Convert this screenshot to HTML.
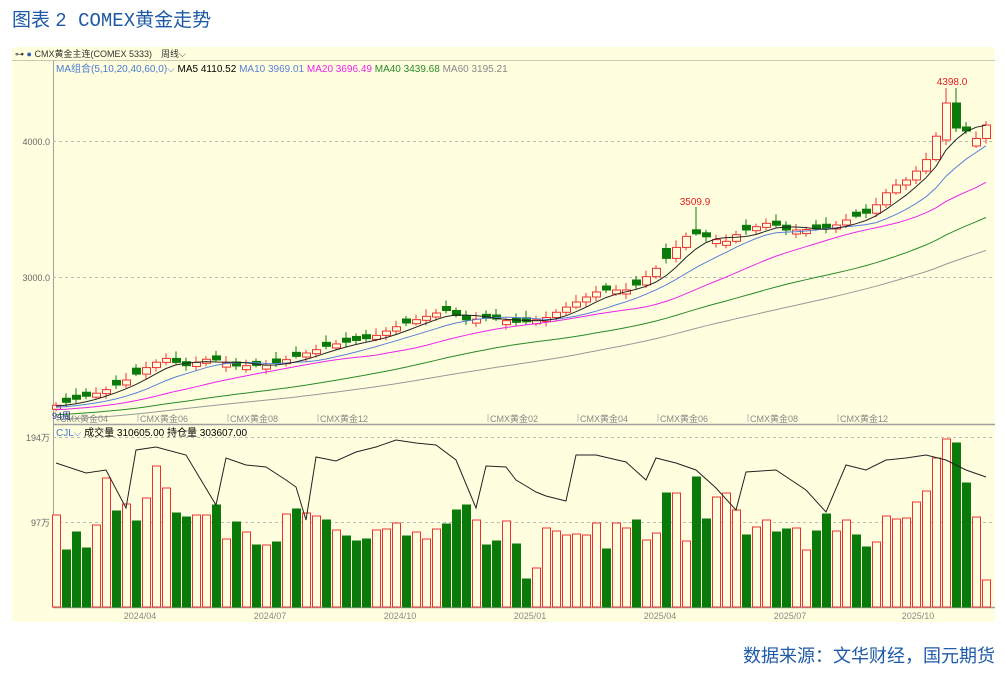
<!DOCTYPE html>
<html><head><meta charset="utf-8"><style>
html,body{margin:0;padding:0;background:#fff;width:1005px;height:673px;overflow:hidden}
svg{position:absolute;left:0;top:0}
text{font-family:"Liberation Sans","Noto Sans CJK SC",sans-serif}
</style></head><body>
<svg id="s" width="1005" height="673" xmlns="http://www.w3.org/2000/svg">
<text x="12" y="26" font-size="19" fill="#1f5aa6">图表 <tspan font-family="Liberation Mono">2 COMEX</tspan>黄金走势</text>
<rect x="12" y="47" width="983" height="575" fill="#ffffe0"/>
<line x1="12" y1="60.5" x2="995" y2="60.5" stroke="#c8c8b4"/>
<line x1="53.5" y1="61" x2="53.5" y2="608" stroke="#a0a0a0"/>
<line x1="53" y1="424.5" x2="995" y2="424.5" stroke="#a0a0a0" stroke-width="1.5"/>
<line x1="53" y1="607.5" x2="995" y2="607.5" stroke="#a0a0a0" stroke-width="1.5"/>
<line x1="53" y1="141.5" x2="995" y2="141.5" stroke="#bbb" stroke-dasharray="3,3"/>
<line x1="53" y1="277.5" x2="995" y2="277.5" stroke="#bbb" stroke-dasharray="3,3"/>
<line x1="53" y1="437.5" x2="995" y2="437.5" stroke="#bbb" stroke-dasharray="3,3"/>
<line x1="53" y1="522.5" x2="995" y2="522.5" stroke="#bbb" stroke-dasharray="3,3"/>
<text x="15" y="57" font-size="9" fill="#333">⊶ <tspan fill="#2a5db0">●</tspan> CMX黄金主连(COMEX 5333)　周线⌵</text>
<text x="56" y="72" font-size="10" fill="#4a78d0">MA组合(5,10,20,40,60,0)⌵ <tspan fill="#000">MA5 4110.52</tspan> <tspan fill="#5a7fd8">MA10 3969.01</tspan> <tspan fill="#ee22ee">MA20 3696.49</tspan> <tspan fill="#2a8a2a">MA40 3439.68</tspan> <tspan fill="#888">MA60 3195.21</tspan></text>
<text x="50" y="145" font-size="9" fill="#666" text-anchor="end">4000.0</text>
<text x="50" y="281" font-size="9" fill="#666" text-anchor="end">3000.0</text>
<text x="50" y="441" font-size="9" fill="#666" text-anchor="end">194万</text>
<text x="50" y="526" font-size="9" fill="#666" text-anchor="end">97万</text>
<text x="56" y="436" font-size="10" fill="#000"><tspan fill="#4a78d0">CJL⌵</tspan> 成交量 310605.00  持仓量 303607.00</text>
<g id="g"></g>
<text x="995" y="662" font-size="18" fill="#1f5aa6" text-anchor="end">数据来源：文华财经，国元期货</text>
</svg>
<script>
var g=document.getElementById('g'),h='';
var vb="56 r515,66 g550,76 g532,86 g548,96 r525,106 r478,116 g511,126 r504,136 g521,146 r498,156 r466,166 r488,176 g513,186 g517,196 r515,206 r515,216 g505,226 r539,236 g522,246 r532,256 g545,266 r545,276 g542,286 r514,296 g509,306 r513,316 r516,326 g520,336 r530,346 g536,356 g541,366 g539,376 r530,386 r529,396 r523,406 g536,416 r532,426 r539,436 r529,446 g524,456 g510,466 g505,476 r520,486 g545,496 g541,506 r521,516 g544,526 g579,536 r568,546 r528,556 r531,566 r535,576 r534,586 r535,596 r523,606 g549,616 r523,626 r528,636 g520,646 r540,656 r533,666 g493,676 r493,686 r541,696 g477,706 g519,716 r497,726 r493,736 r510,746 g535,756 r527,766 r520,776 g532,786 g529,796 r528,806 r550,816 g531,826 g514,836 r531,846 r520,856 g535,866 g547,876 r542,886 r516,896 r519,906 r518,916 r502,926 r491,936 r458,946 r439,956 g443,966 g483,976 r517,986 r580".split(',').map(function(s){var a=s.split(' ');return {x:+a[0],c:a[1][0],t:+a[1].slice(1)}});
var cp=[[57,405],[100,392],[110,388],[130,378],[150,365],[165,358],[185,366],[210,358],[235,366],[270,365],[300,355],[330,345],[370,338],[400,325],[430,315],[445,310],[465,320],[490,318],[520,323],[545,318],[570,305],[600,290],[630,290],[660,265],[690,232],[710,238],[725,242],[740,232],[770,222],[785,230],[800,230],[830,228],[850,218],[870,212],[890,188],[910,178],[930,155],[945,108],[955,125],[965,130],[975,140],[985,125]];
function interp(p,x){for(var i=0;i<p.length-1;i++){if(x<=p[i+1][0]){var f=(x-p[i][0])/(p[i+1][0]-p[i][0]);return p[i][1]+f*(p[i+1][1]-p[i][1]);}}return p[p.length-1][1];}
var closes=[];for(var i=0;i<60;i++)closes.push(435-i*0.5);
var prev=406;
vb.forEach(function(b,i){
 var c=interp(cp,b.x);var d=Math.max(Math.abs(c-prev),4);
 var o=b.c=='r'?c+d:c-d;
 if(b.x==946){o=140;c=103;} if(b.x==956){o=103;c=128;}
 var top=Math.min(o,c),bot=Math.max(o,c);
 var col=b.c=='r'?'#f03030':'#0a7a0a';
 var hi=top-3-((i*7)%5),lo=bot+2+((i*3)%4);
 if(b.x==946)hi=88; if(b.x==956)hi=88; if(b.x==696)hi=207;
 h+='<line x1="'+b.x+'" y1="'+hi+'" x2="'+b.x+'" y2="'+lo+'" stroke="'+col+'"/>';
 h+='<rect x="'+(b.x-4)+'.5" y="'+top+'" width="8" height="'+(bot-top)+'" fill="'+(b.c=='r'?'#ffffe0':'#0a7a0a')+'" stroke="'+col+'"/>';
 h+='<rect x="'+(b.x-4)+'.5" y="'+b.t+'" width="8" height="'+(607-b.t)+'" fill="'+(b.c=='r'?'#ffffe0':'#0a7a0a')+'" stroke="'+(b.c=='r'?'#f03030':'#0a7a0a')+'"/>';
 closes.push(c);prev=c;
});
function ma(n,col){var pts=[];for(var i=0;i<vb.length;i++){var s=0;for(var k=0;k<n;k++)s+=closes[60+i-k];pts.push(vb[i].x+','+(s/n).toFixed(1));}
 h+='<polyline points="'+pts.join(' ')+'" fill="none" stroke="'+col+'" stroke-width="1"/>';}
ma(60,'#999');ma(40,'#2a8a2a');ma(20,'#ee22ee');ma(10,'#5a7fd8');ma(5,'#222');
var oi=[[56,463],[86,473],[106,470],[126,508],[136,450],[156,447],[186,455],[216,505],[226,458],[246,465],[266,467],[286,480],[296,487],[306,520],[316,457],[336,461],[356,452],[376,447],[396,440],[416,443],[436,445],[456,460],[476,508],[486,466],[506,467],[516,480],[526,486],[536,492],[546,496],[566,501],[576,455],[596,455],[626,462],[646,480],[656,458],[676,463],[696,470],[716,488],[736,510],[746,472],[776,470],[806,490],[826,512],[846,465],[866,470],[886,460],[906,458],[926,455],[946,460],[966,470],[986,477]];
h+='<polyline points="'+oi.map(function(p){return p.join(',')}).join(' ')+'" fill="none" stroke="#222"/>';
h+='<text x="695" y="205" font-size="10" fill="#e02020" text-anchor="middle">3509.9</text>';
h+='<text x="952" y="85" font-size="10" fill="#e02020" text-anchor="middle">4398.0</text>';
[[58,'04'],[138,'06'],[228,'08'],[318,'12'],[488,'02'],[578,'04'],[658,'06'],[748,'08'],[838,'12']].forEach(function(a){
 h+='<line x1="'+a[0]+'" y1="414" x2="'+a[0]+'" y2="422" stroke="#bbb"/><text x="'+(a[0]+2)+'" y="422" font-size="9" fill="#888">CMX黄金'+a[1]+'</text>';});
h+='<text x="52" y="419" font-size="9" fill="#1a2a8a">94周</text>';
[[140,'2024/04'],[270,'2024/07'],[400,'2024/10'],[530,'2025/01'],[660,'2025/04'],[790,'2025/07'],[918,'2025/10']].forEach(function(a){
 h+='<text x="'+a[0]+'" y="619" font-size="9" fill="#888" text-anchor="middle">'+a[1]+'</text>';});
g.innerHTML=h;
</script>
</body></html>
